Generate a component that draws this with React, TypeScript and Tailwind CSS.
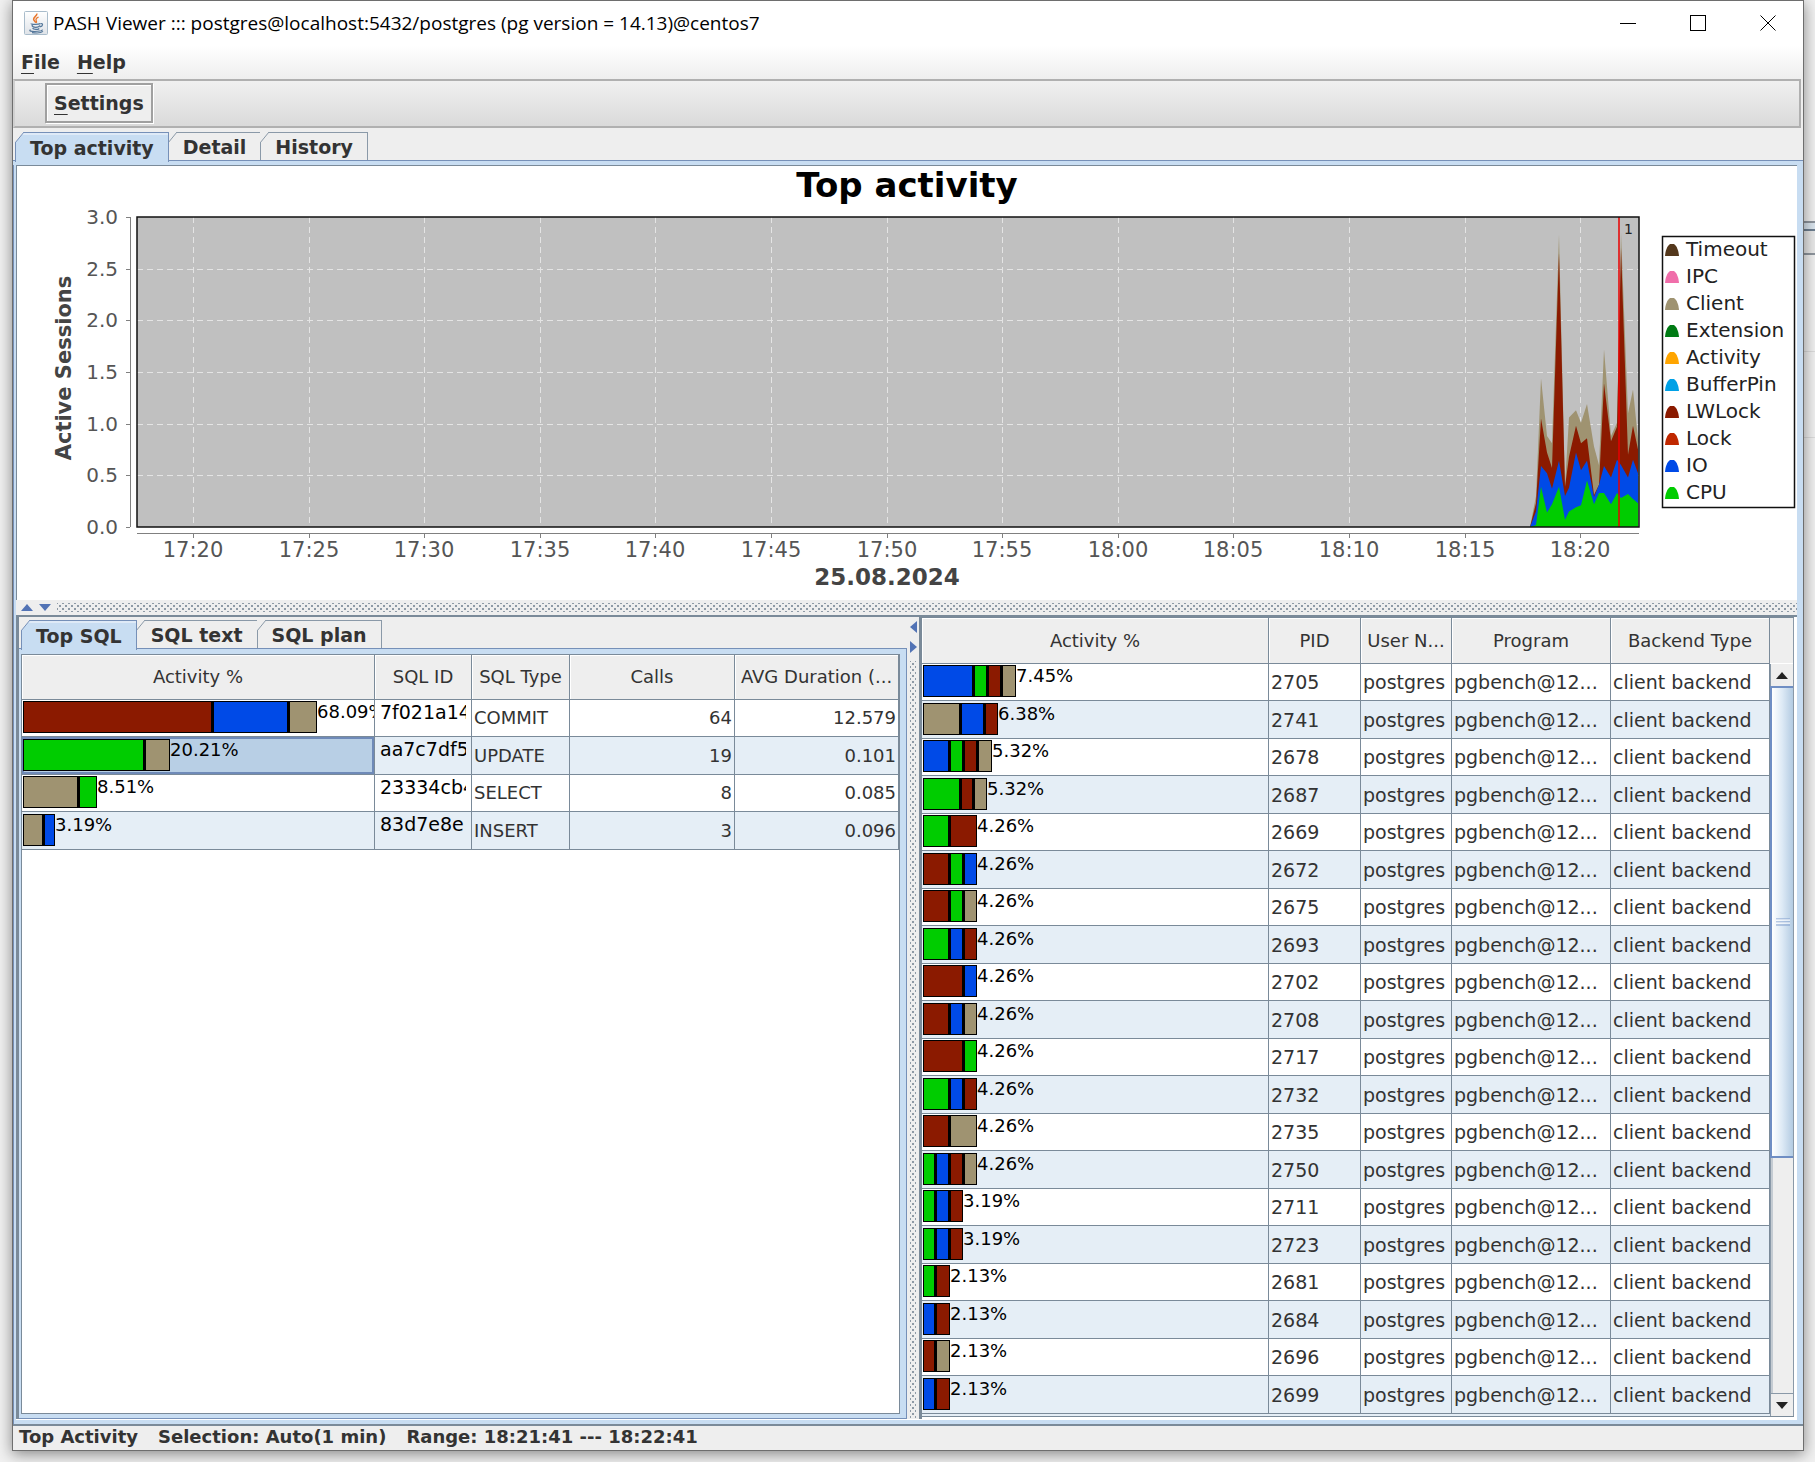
//@Third-Party
import type { ReactNode } from "react";
//------------------------------------------------------

//@Types
type TWait = "cpu" | "io" | "lwlock" | "client";

interface ISegment {
  wait: TWait;
  width: number;
}

interface ISqlRow {
  segments: ISegment[];
  percent: string;
  id: string;
  type: string;
  calls: string;
  duration: string;
}

interface ISessionRow {
  segments: ISegment[];
  percent: string;
  pid: string;
}
//------------------------------------------------------

//@Data
const colors: Record<TWait, string> = {
  cpu: "#00cc00",
  io: "#004ae7",
  lwlock: "#8b1a00",
  client: "#9f9371",
};

const legend = [
  { name: "Timeout", color: "#54381c" },
  { name: "IPC", color: "#f06eaa" },
  { name: "Client", color: "#9f9371" },
  { name: "Extension", color: "#007b14" },
  { name: "Activity", color: "#ffa500" },
  { name: "BufferPin", color: "#00a1e6" },
  { name: "LWLock", color: "#8b1a00" },
  { name: "Lock", color: "#c02800" },
  { name: "IO", color: "#004ae7" },
  { name: "CPU", color: "#00cc00" },
];

const seg = (wait: TWait, width: number): ISegment => ({ wait, width });

const sqlRows: ISqlRow[] = [
  {
    segments: [seg("lwlock", 190), seg("io", 76), seg("client", 28)],
    percent: "68.09%",
    id: "7f021a14",
    type: "COMMIT",
    calls: "64",
    duration: "12.579",
  },
  {
    segments: [seg("cpu", 122), seg("client", 25)],
    percent: "20.21%",
    id: "aa7c7df5",
    type: "UPDATE",
    calls: "19",
    duration: "0.101",
  },
  {
    segments: [seg("client", 56), seg("cpu", 18)],
    percent: "8.51%",
    id: "23334cb4",
    type: "SELECT",
    calls: "8",
    duration: "0.085",
  },
  {
    segments: [seg("client", 21), seg("io", 11)],
    percent: "3.19%",
    id: "83d7e8e",
    type: "INSERT",
    calls: "3",
    duration: "0.096",
  },
];

const sessionRows: ISessionRow[] = [
  { pid: "2705", percent: "7.45%", segments: [seg("io", 51), seg("cpu", 14), seg("lwlock", 14), seg("client", 14)] },
  { pid: "2741", percent: "6.38%", segments: [seg("client", 38), seg("io", 24), seg("lwlock", 13)] },
  { pid: "2678", percent: "5.32%", segments: [seg("io", 27), seg("cpu", 14), seg("lwlock", 14), seg("client", 14)] },
  { pid: "2687", percent: "5.32%", segments: [seg("cpu", 38), seg("lwlock", 13), seg("client", 13)] },
  { pid: "2669", percent: "4.26%", segments: [seg("cpu", 27), seg("lwlock", 27)] },
  { pid: "2672", percent: "4.26%", segments: [seg("lwlock", 27), seg("cpu", 14), seg("io", 13)] },
  { pid: "2675", percent: "4.26%", segments: [seg("lwlock", 27), seg("cpu", 14), seg("client", 13)] },
  { pid: "2693", percent: "4.26%", segments: [seg("cpu", 27), seg("io", 14), seg("lwlock", 13)] },
  { pid: "2702", percent: "4.26%", segments: [seg("lwlock", 41), seg("io", 13)] },
  { pid: "2708", percent: "4.26%", segments: [seg("lwlock", 27), seg("io", 14), seg("client", 13)] },
  { pid: "2717", percent: "4.26%", segments: [seg("lwlock", 41), seg("cpu", 13)] },
  { pid: "2732", percent: "4.26%", segments: [seg("cpu", 27), seg("io", 14), seg("lwlock", 13)] },
  { pid: "2735", percent: "4.26%", segments: [seg("lwlock", 27), seg("client", 27)] },
  { pid: "2750", percent: "4.26%", segments: [seg("cpu", 13), seg("io", 14), seg("lwlock", 14), seg("client", 13)] },
  { pid: "2711", percent: "3.19%", segments: [seg("cpu", 13), seg("io", 14), seg("lwlock", 13)] },
  { pid: "2723", percent: "3.19%", segments: [seg("cpu", 13), seg("io", 14), seg("lwlock", 13)] },
  { pid: "2681", percent: "2.13%", segments: [seg("cpu", 13), seg("lwlock", 14)] },
  { pid: "2684", percent: "2.13%", segments: [seg("io", 13), seg("lwlock", 14)] },
  { pid: "2696", percent: "2.13%", segments: [seg("lwlock", 13), seg("client", 14)] },
  { pid: "2699", percent: "2.13%", segments: [seg("io", 13), seg("lwlock", 14)] },
];

// stacked totals, one entry per sample
const sampleX = [1393, 1399, 1404, 1410, 1415, 1422, 1428, 1432, 1439, 1444, 1450, 1457, 1462, 1467, 1474, 1480, 1484, 1491, 1496, 1501];
const series: { wait: TWait; values: number[] }[] = [
  {
    wait: "client",
    values: [0, 0.3, 1.44, 0.88, 0.81, 2.83, 0.4, 1.06, 1.13, 1.01, 1.19, 0.78, 0.6, 1.72, 0.88, 1.01, 2.85, 1.1, 1.33, 0.85],
  },
  {
    wait: "lwlock",
    values: [0, 0.23, 1.05, 0.72, 0.57, 2.65, 0.39, 0.68, 0.98, 0.81, 0.86, 0.31, 0.41, 1.39, 0.83, 0.97, 2.7, 0.7, 0.98, 0.75],
  },
  {
    wait: "io",
    values: [0, 0.15, 0.59, 0.52, 0.37, 0.64, 0.3, 0.38, 0.72, 0.55, 0.64, 0.29, 0.41, 0.59, 0.48, 0.65, 0.6, 0.48, 0.65, 0.52],
  },
  {
    wait: "cpu",
    values: [0, 0.02, 0.39, 0.14, 0.22, 0.39, 0.07, 0.15, 0.19, 0.21, 0.45, 0.22, 0.33, 0.33, 0.22, 0.33, 0.28, 0.32, 0.27, 0.23],
  },
];

const timeTicks = ["17:20", "17:25", "17:30", "17:35", "17:40", "17:45", "17:50", "17:55", "18:00", "18:05", "18:10", "18:15", "18:20"];
const valueTicks = ["3.0", "2.5", "2.0", "1.5", "1.0", "0.5", "0.0"];
//------------------------------------------------------

function JavaIcon() {
  return (
    <svg className="h-6 w-6 shrink-0" viewBox="0 0 24 24" fill="none" aria-hidden="true">
      <defs>
        <linearGradient id="javaTile" x1="0" y1="0" x2="0" y2="1">
          <stop offset="0" stopColor="#ffffff" />
          <stop offset="1" stopColor="#dfe3e8" />
        </linearGradient>
      </defs>
      <rect x="0.5" y="0.5" width="23" height="23" rx="1" fill="url(#javaTile)" stroke="#a9bccb" />
      <path d="M12.8 2.5c1 2-3.6 3.6-3.2 5.9.2 1.3 1.8 2.1 2.2 3.3" stroke="#e8762c" strokeWidth="1.5" />
      <path d="M14.6 6c-2 .9-3 1.9-2.6 3.1.3.9 1.1 1.4.3 2.8" stroke="#e8762c" strokeWidth="1.2" />
      <path d="M7.5 12.6c-1.6.7 6.5 1.1 8.7.1M8 14.2c.4 2.8 7 2.7 7.9.2M8.6 17.2c1 1.6 5.2 1.6 6.7.2" stroke="#55789b" strokeWidth="1.3" />
      <path d="M16.4 12.7c3.2-.8 2.7 2.7-.7 3.1" stroke="#55789b" strokeWidth="1.2" />
      <path d="M6.6 18.8c-3.4 1.4 4 2.5 10.4.9 1.4-.4 1.4-.8.9-1.1M8 21.6c4.2.6 9.4.3 11-1.2" stroke="#55789b" strokeWidth="1.1" />
    </svg>
  );
}

function TitleBar() {
  return (
    <header className="flex h-[45px] items-center bg-white pb-[2px] pl-[11px]">
      <JavaIcon />
      <h1 className="grow truncate pl-[5px] font-['Open_Sans',sans-serif] text-[19px] leading-6 text-black">
        PASH Viewer ::: postgres@localhost:5432/postgres (pg version = 14.13)@centos7
      </h1>
      <button type="button" aria-label="Minimize" className="flex h-full w-[70px] items-center justify-center">
        <svg width="16" height="16" stroke="#000" aria-hidden="true">
          <path d="M0 8.5h16" />
        </svg>
      </button>
      <button type="button" aria-label="Maximize" className="flex h-full w-[70px] items-center justify-center">
        <svg width="16" height="16" stroke="#000" fill="none" aria-hidden="true">
          <rect x="0.5" y="0.5" width="15" height="15" />
        </svg>
      </button>
      <button type="button" aria-label="Close" className="flex h-full w-[70px] items-center justify-center">
        <svg width="16" height="16" stroke="#000" aria-hidden="true">
          <path d="M0.5 0.5l15 15M15.5 0.5l-15 15" />
        </svg>
      </button>
    </header>
  );
}

function MenuBar() {
  return (
    <nav className="flex h-[33px] items-center gap-[17px] bg-linear-to-b from-white to-[#eeeeee] pb-[2px] pl-2 text-[19px] leading-6 font-bold">
      <button type="button">
        <u className="underline-offset-4">F</u>ile
      </button>
      <button type="button">
        <u className="underline-offset-4">H</u>elp
      </button>
    </nav>
  );
}

interface ITab {
  children: ReactNode;
  active?: boolean;
}

function Tab({ children, active }: ITab) {
  return (
    <button
      type="button"
      role="tab"
      aria-selected={!!active}
      className={
        active
          ? "relative z-10 -mb-[2px] h-[30px] border-t border-r border-l border-[#7690b8] bg-[#c8ddf2] px-[14px] text-[19px] leading-6 font-bold shadow-[inset_0_2px_0_#dfeaf7]"
          : "relative h-7 border-t border-r border-[#8a99a8] bg-[#eeeeee] px-[14px] text-[19px] leading-6 font-bold"
      }
    >
      {/* cut corner */}
      <svg className="absolute -top-px -left-px" width="9" height="11" aria-hidden="true">
        <path d="M0 0h9L0 11z" fill="#eeeeee" />
        <path d="M9 0L0 11" stroke={active ? "#7690b8" : "#8a99a8"} fill="none" />
      </svg>
      {children}
    </button>
  );
}

function ActivityChart() {
  const x0 = 119;
  const y0 = 51;
  const width = 1502;
  const height = 310;
  const tickX = (i: number) => 175 + Math.round(i * 115.6);
  const tickY = (i: number) => y0 + Math.round((i * height) / 6);

  const area = (values: number[]) => {
    const top = values.map((v, i) => `${x0 + sampleX[i]},${y0 + height - (v * height) / 3}`);
    return [`${x0 + sampleX[0]},${y0 + height}`, ...top, `${x0 + width - 1},${y0 + height}`].join(" ");
  };

  return (
    <svg
      className="block h-auto w-full bg-white"
      viewBox="0 0 1779 434"
      fontFamily="'DejaVu Sans', sans-serif"
      role="img"
      aria-label="Top activity"
    >
      <text x="889" y="31" fontSize="34" fontWeight="bold" textAnchor="middle" fill="#000">
        Top activity
      </text>
      <rect x={x0} y={y0} width={width} height={height} fill="#c0c0c0" />

      {/* grid */}
      <g stroke="#e4e4e4" strokeDasharray="6 4">
        {timeTicks.map((t, i) => (
          <path key={t} d={`M${tickX(i) + 0.5} ${y0}v${height}`} />
        ))}
        {valueTicks.slice(1, -1).map((v, i) => (
          <path key={v} d={`M${x0} ${tickY(i + 1) + 0.5}h${width}`} />
        ))}
      </g>

      {/* stacked areas */}
      {series.map((s) => (
        <polygon key={s.wait} points={area(s.values)} fill={colors[s.wait]} />
      ))}
      <path d={`M${x0 + 1482} ${y0}v${height}`} stroke="#e80000" strokeOpacity="0.75" strokeWidth="2" />
      <text x="1606" y="68" fontSize="14" fill="#222">
        1
      </text>
      <rect x={x0} y={y0} width={width} height={height} fill="none" stroke="#111" strokeWidth="1.5" />

      {/* axes */}
      <g stroke="#808080" fill="none">
        <path d={`M112.5 ${y0}v${height}`} />
        <path d={`M${x0} 367.5h${width}`} />
        {valueTicks.map((v, i) => (
          <path key={v} d={`M108 ${tickY(i) + 0.5}h4`} />
        ))}
        {timeTicks.map((t, i) => (
          <path key={t} d={`M${tickX(i) + 0.5} 368v4`} />
        ))}
      </g>
      <g fontSize="20" fill="#555">
        {valueTicks.map((v, i) => (
          <text key={v} x="100" y={tickY(i) + 7} textAnchor="end">
            {v}
          </text>
        ))}
      </g>
      <g fontSize="21" fill="#555">
        {timeTicks.map((t, i) => (
          <text key={t} x={tickX(i)} y="391" textAnchor="middle">
            {t}
          </text>
        ))}
      </g>
      <text x="869" y="419" fontSize="23" fontWeight="bold" textAnchor="middle" fill="#444">
        25.08.2024
      </text>
      <text transform="translate(53 202) rotate(-90)" fontSize="21" fontWeight="bold" textAnchor="middle" fill="#444">
        Active Sessions
      </text>

      {/* legend */}
      <rect x="1644.5" y="70.5" width="132" height="271" fill="#fff" stroke="#111" strokeWidth="1.5" />
      {legend.map((item, i) => (
        <g key={item.name} transform={`translate(1647 ${78 + i * 27})`}>
          <path d="M0 12c.4-5 2-10 5-12h4c3 2 4.6 7 5 12z" fill={item.color} />
          <text x="21" y="12" fontSize="20" fill="#222">
            {item.name}
          </text>
        </g>
      ))}
    </svg>
  );
}

function ActivityBar({ segments, percent }: { segments: ISegment[]; percent: string }) {
  return (
    <div className="flex h-9 overflow-hidden pt-px pl-px">
      {segments.map((s, i) => (
        <span
          key={i}
          className="h-8 shrink-0 border border-r-2 border-black last-of-type:border-r"
          style={{ width: s.width, backgroundColor: colors[s.wait] }}
        />
      ))}
      <em className="text-[18px] leading-[22px] text-black not-italic">{percent}</em>
    </div>
  );
}

const headCell =
  "truncate border-r border-b border-[#7a8a99] p-0 px-1 text-center font-normal shadow-[inset_1px_1px_0_#ffffff]";
const bodyCell = "overflow-hidden border-r border-b border-[#7a8a99] p-0 whitespace-nowrap";

function SqlTable() {
  return (
    <table className="w-full table-fixed border-separate border-spacing-0 text-[18px] leading-6">
      <colgroup>
        <col />
        <col className="w-[97px]" />
        <col className="w-[98px]" />
        <col className="w-[165px]" />
        <col className="w-[164px]" />
      </colgroup>
      <thead className="bg-[#eeeeee]">
        <tr className="h-[45px]">
          <th className={headCell}>Activity %</th>
          <th className={headCell}>SQL ID</th>
          <th className={headCell}>SQL Type</th>
          <th className={headCell}>Calls</th>
          <th className={headCell}>AVG Duration (...</th>
        </tr>
      </thead>
      <tbody>
        {sqlRows.map((row, i) => (
          <tr key={row.id} className="odd:h-[37px] even:h-[38px] even:bg-[#e5eef6]">
            <td className={bodyCell + (i === 1 ? " bg-[#b8cfe5] shadow-[inset_0_0_0_2px_#6f8ab8]" : "")}>
              <ActivityBar segments={row.segments} percent={row.percent} />
            </td>
            <td className={bodyCell + " pr-[5px] pl-[5px] align-top text-[19px] text-black"}>
              <div className="overflow-hidden">{row.id}</div>
            </td>
            <td className={bodyCell + " pl-[2px]"}>{row.type}</td>
            <td className={bodyCell + " pr-[2px] text-right"}>{row.calls}</td>
            <td className={bodyCell + " pr-[2px] text-right"}>{row.duration}</td>
          </tr>
        ))}
      </tbody>
    </table>
  );
}

function SessionTable() {
  return (
    <table className="w-full table-fixed border-separate border-spacing-0 text-[18px] leading-6">
      <colgroup>
        <col />
        <col className="w-[92px]" />
        <col className="w-[91px]" />
        <col className="w-[159px]" />
        <col className="w-[159px]" />
      </colgroup>
      <thead className="bg-[#eeeeee]">
        <tr className="h-[46px]">
          <th className={headCell}>Activity %</th>
          <th className={headCell}>PID</th>
          <th className={headCell}>User N...</th>
          <th className={headCell}>Program</th>
          <th className={headCell}>Backend Type</th>
        </tr>
      </thead>
      <tbody className="text-[19px]">
        {sessionRows.map((row) => (
          <tr key={row.pid} className="odd:h-[37px] odd:bg-white even:h-[38px] even:bg-[#e5eef6]">
            <td className={bodyCell}>
              <ActivityBar segments={row.segments} percent={row.percent} />
            </td>
            <td className={bodyCell + " pl-[2px]"}>{row.pid}</td>
            <td className={bodyCell + " pl-[2px]"}>postgres</td>
            <td className={bodyCell + " pl-[2px]"}>pgbench@12...</td>
            <td className={bodyCell + " pl-[2px]"}>client backend</td>
          </tr>
        ))}
      </tbody>
    </table>
  );
}

function ScrollBar() {
  return (
    <div className="flex w-6 shrink-0 flex-col border-r border-[#8a99a8] bg-[#eeeeee]">
      <div className="h-[46px] border-b border-white" />
      <button type="button" aria-label="Scroll up" className="flex h-[22px] items-center justify-center border-l border-[#8a99a8]">
        <svg width="12" height="7" aria-hidden="true">
          <path d="M6 0l6 7H0z" fill="#222" />
        </svg>
      </button>
      <div className="flex h-[472px] items-center justify-center border-2 border-r-0 border-[#6f8ec4] bg-linear-to-r from-white via-[#dce9f5] to-[#b3cbe2]">
        <svg width="14" height="8" aria-hidden="true">
          <path d="M0 1h14M0 4h14M0 7h14" stroke="#7f9ccc" strokeWidth="1" />
          <path d="M0 2h14M0 5h14" stroke="#ffffff" />
        </svg>
      </div>
      <div className="grow border-l border-[#8a99a8] shadow-[inset_2px_0_0_#c4cbd2]" />
      <button type="button" aria-label="Scroll down" className="flex h-[23px] items-center justify-center border-t border-l border-[#8a99a8]">
        <svg width="12" height="7" aria-hidden="true">
          <path d="M0 0h12L6 7z" fill="#222" />
        </svg>
      </button>
    </div>
  );
}

const dots =
  "bg-[radial-gradient(#8e9aa6_1px,transparent_1px),radial-gradient(#8e9aa6_1px,transparent_1px)] bg-[length:6px_6px] bg-[position:0_0,3px_3px]";

export default function App() {
  return (
    <div className="relative min-h-screen overflow-hidden bg-[#f1f1f1] pr-[11px] pb-[11px] pl-3 font-['DejaVu_Sans',sans-serif] text-[#333333]">
      {/* edge of the window behind */}
      <div className="absolute top-[221px] right-0 h-[34px] w-4 border-y-2 border-[#8f969e] bg-[#e9e9e9]">
        <div className="h-2 border-b-2 border-[#6e7f91] bg-[#dbe6ef]" />
      </div>
      <div className="absolute top-[351px] right-0 h-[87px] w-4 border-y border-[#dcdcdc]" />

      <div className="relative flex flex-col border border-[#6e6e6e] bg-[#eeeeee] shadow-[0_3px_14px_rgba(0,0,0,0.45)]">
        <TitleBar />
        <MenuBar />

        {/* toolbar */}
        <div className="mr-[2px] flex h-[49px] items-center border-2 border-[#b0b0b0] border-l-[#d0d0d0] bg-linear-to-b from-[#f0f0f0] to-[#dadada] pb-px pl-[30px]">
          <button
            type="button"
            className="h-10 border-2 border-[#a0a0a0] bg-[#eeeeee] px-[7px] text-[19px] leading-6 font-bold shadow-[inset_1px_1px_0_#ffffff,1px_1px_0_#ffffff]"
          >
            <u className="underline-offset-4">S</u>ettings
          </button>
        </div>

        {/* main tabs */}
        <div role="tablist" className="flex items-end pt-1 pl-[2px]">
          <Tab active>Top activity</Tab>
          <Tab>Detail</Tab>
          <Tab>History</Tab>
        </div>

        <main className="border-t border-[#7690b8] bg-[#c8ddf2] pt-1">
          <div className="border-l border-[#7690b8] pr-[6px] pl-[2px]">
            <section className="border-t border-l border-[#7a8a99] bg-white pl-px">
              <ActivityChart />
            </section>

            {/* horizontal splitter */}
            <div className="flex h-[15px] items-center gap-[6px] bg-[#eeeeee] pb-px pl-[5px]">
              <button type="button" aria-label="Collapse chart">
                <svg className="block" width="12" height="7" aria-hidden="true">
                  <path d="M6 0l6 7H0z" fill="#5273b5" />
                </svg>
              </button>
              <button type="button" aria-label="Expand chart">
                <svg className="block" width="12" height="7" aria-hidden="true">
                  <path d="M0 0h12L6 7z" fill="#5273b5" />
                </svg>
              </button>
              <div className={"h-[9px] grow " + dots} />
            </div>

            <div className="grid grid-cols-[891fr_12px_878fr] border-t-2 border-[#7a8a99] bg-white pb-px">
              {/* SQL pane */}
              <section className="flex min-w-0 flex-col border-l-[3px] border-[#7a8a99] bg-[#eeeeee]">
                <div role="tablist" className="flex items-end pt-[3px] pl-[2px]">
                  <Tab active>Top SQL</Tab>
                  <Tab>SQL text</Tab>
                  <Tab>SQL plan</Tab>
                </div>
                <div className="flex grow flex-col border-t border-r border-b border-[#7690b8] bg-[#c8ddf2] pt-[5px] pr-[6px] pb-1 pl-[2px]">
                  <div className="grow border border-[#7a8a99] bg-white">
                    <SqlTable />
                  </div>
                </div>
              </section>

              {/* vertical splitter */}
              <div className="flex flex-col items-center gap-2 bg-[#eeeeee] pt-1">
                <button type="button" aria-label="Collapse left pane">
                  <svg className="block" width="7" height="12" aria-hidden="true">
                    <path d="M7 0v12L0 6z" fill="#5273b5" />
                  </svg>
                </button>
                <button type="button" aria-label="Expand left pane">
                  <svg className="block" width="7" height="12" aria-hidden="true">
                    <path d="M0 0v12l7-6z" fill="#5273b5" />
                  </svg>
                </button>
                <div className={"w-[6px] grow " + dots} />
              </div>

              {/* sessions pane */}
              <section className="min-w-0 border-l-[3px] border-[#7a8a99] pr-[3px] pb-[2px]">
                <div className="flex border-y border-[#7a8a99]">
                  <div className="min-w-0 grow bg-[#e5eef6] pb-[2px]">
                    <SessionTable />
                  </div>
                  <ScrollBar />
                </div>
              </section>
            </div>
          </div>
          <div className="h-1 border-l border-[#7690b8]" />
        </main>

        {/* status bar */}
        <footer className="flex h-[26px] gap-[20px] border-t-2 border-[#7a8a99] pl-[6px] text-[18px] leading-[22px] font-bold">
          <span>Top Activity</span>
          <span>Selection: Auto(1 min)</span>
          <span>Range: 18:21:41 --- 18:22:41</span>
        </footer>
      </div>
    </div>
  );
}
